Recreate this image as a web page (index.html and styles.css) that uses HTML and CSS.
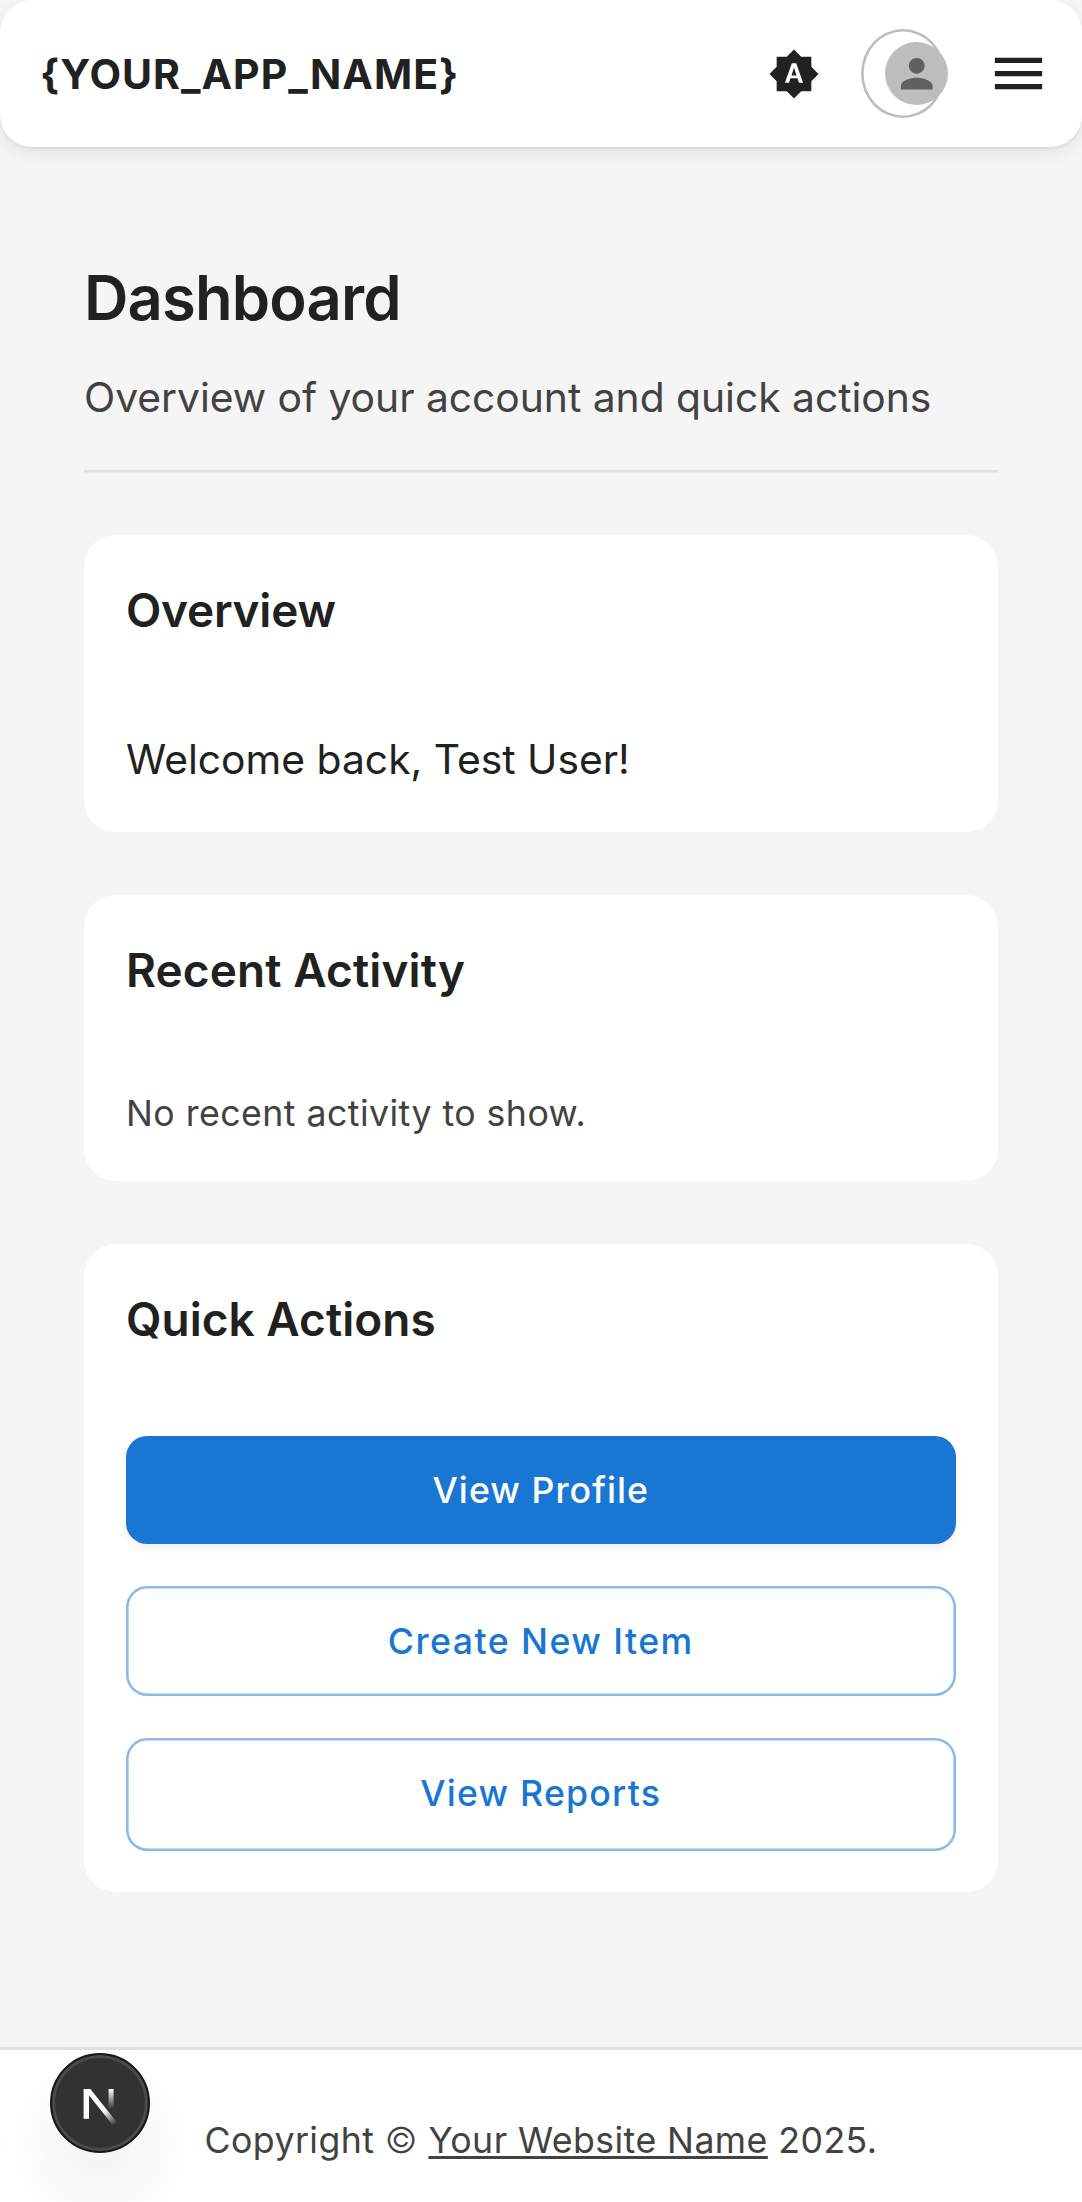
FILE: index.html
```html
<!DOCTYPE html>
<html lang="en">
<head>
<meta charset="utf-8">
<title>Dashboard</title>
<link rel="stylesheet" href="styles.css">
</head>
<body>
<div class="page">
  <header class="appbar">
    <div class="brand">{YOUR_APP_NAME}</div>
    <svg class="theme-icon" viewBox="0 0 24 24"><path d="M10.85 12.65h2.3L12 9l-1.15 3.65zM20 8.69V4h-4.69L12 .69 8.69 4H4v4.69L.69 12 4 15.31V20h4.69L12 23.31 15.31 20H20v-4.69L23.31 12 20 8.69zM14.3 16l-.7-2h-3.2l-.7 2H7.8L11 7h2l3.2 9h-1.9z"/></svg>
    <div class="account">
      <span class="avatar"><svg viewBox="0 0 24 24"><path d="M12 12c2.21 0 4-1.79 4-4s-1.79-4-4-4-4 1.79-4 4 1.79 4 4 4zm0 2c-2.67 0-8 1.34-8 4v2h16v-2c0-2.66-5.33-4-8-4z"/></svg></span>
    </div>
    <svg class="menu-icon" viewBox="0 0 24 24"><path d="M3 18h18v-2H3v2zm0-5h18v-2H3v2zm0-7v2h18V6H3z"/></svg>
  </header>

  <main class="main">
    <div class="intro">
      <h1>Dashboard</h1>
      <p>Overview of your account and quick actions</p>
    </div>
    <section class="card">
      <h2 class="t-overview">Overview</h2>
      <p class="welcome">Welcome back, Test User!</p>
    </section>
    <section class="card">
      <h2 class="t-recent">Recent Activity</h2>
      <p class="muted">No recent activity to show.</p>
    </section>
    <section class="card quick">
      <h2>Quick Actions</h2>
      <div class="actions">
        <button class="btn primary">View Profile</button>
        <button class="btn create">Create New Item</button>
        <button class="btn reports">View Reports</button>
      </div>
    </section>
  </main>

  <footer class="footer">Copyright <span class="mark">©</span> <a>Your Website Name</a> 2025.</footer>

  <div class="devtools">
    <svg viewBox="0 0 100 100">
      <defs>
        <linearGradient id="diag" gradientUnits="userSpaceOnUse" x1="54" y1="58" x2="65" y2="72"><stop offset="0" stop-color="#fff"/><stop offset="1" stop-color="#fff" stop-opacity="0"/></linearGradient>
        <linearGradient id="stem" gradientUnits="userSpaceOnUse" x1="0" y1="36" x2="0" y2="56"><stop offset="0" stop-color="#fff"/><stop offset="1" stop-color="#fff" stop-opacity="0"/></linearGradient>
      </defs>
      <rect x="33.6" y="36" width="5.4" height="29.8" fill="#fff"/>
      <polygon points="33.6,36 40.4,36 67,69.4 63,72.6 36,38.6" fill="url(#diag)"/>
      <rect x="58.6" y="36" width="5" height="20" fill="url(#stem)"/>
    </svg>
  </div>
</div>
</body>
</html>
```
FILE: styles.css
```css
* { box-sizing: border-box; }

body {
  margin: 0;
  background: #f5f5f5;
  color: #212121;
  font-family: Inter, "Liberation Sans", sans-serif;
  font-optical-sizing: none;
}

h1, h2, p { margin: 0; }

.page {
  position: relative;
  display: flex;
  flex-direction: column;
  height: 2202px;
  overflow: hidden;
}

.appbar {
  display: flex;
  align-items: center;
  gap: 42px;
  height: 147px;
  padding: 0 32px 0 40px;
  background: #fff;
  border-radius: 32px;
  box-shadow: 0 2px 3px rgba(0, 0, 0, .06), 0 6px 18px rgba(0, 0, 0, .07);
}

.brand {
  flex: 1;
  padding-top: 1px;
  font-size: 41px;
  font-weight: 650;
  letter-spacing: 1px;
}

.theme-icon { width: 52px; height: 52px; margin: 1px -.6px 0 0; fill: #212121; }
.menu-icon { width: 63px; height: 63px; fill: #212121; }

.account {
  display: flex;
  align-items: center;
  width: 84px;
  height: 89px;
  padding-left: 23.5px;
  border-radius: 50%;
  box-shadow: inset 0 0 0 2.6px #bdbdbd;
}

.avatar {
  display: flex;
  flex: none;
  align-items: center;
  justify-content: center;
  width: 63.5px;
  height: 63.5px;
  border-radius: 50%;
  background: #bdbdbd;
}
.avatar svg { width: 47.5px; height: 47.5px; fill: #616161; }

.main {
  display: flex;
  flex-direction: column;
  gap: 63px;
  width: 913.5px;
  margin: 112px 0 0 84px;
}

.intro {
  height: 213.2px;
  border-bottom: 2px solid #e0e0e0;
  box-shadow: 0 1px 0 #ececec;
}
.intro h1 {
  font-size: 61.5px;
  font-weight: 600;
  line-height: 78px;
  letter-spacing: -.85px;
}
.intro p {
  margin-top: 29px;
  color: #424242;
  font-size: 40.8px;
  line-height: 63px;
  letter-spacing: -.03px;
}

.card {
  padding: 43px 42px 41px;
  background: #fff;
  border-radius: 32px;
}
.card h2 {
  margin-bottom: 84px;
  font-size: 45.9px;
  font-weight: 600;
  line-height: 66px;
}
.card .t-overview { letter-spacing: -.2px; }
.card .t-recent { margin-bottom: 83px; letter-spacing: .15px; }
.quick { padding-top: 42.6px; }
.quick h2 { margin-bottom: 83px; letter-spacing: .06px; }

.welcome { font-size: 40.8px; line-height: 63px; }

.muted {
  color: #424242;
  font-size: 35.7px;
  line-height: 53.2px;
  letter-spacing: .45px;
}

.actions { display: flex; flex-direction: column; gap: 41.6px; }

.btn {
  height: 110.7px;
  padding: 0;
  border: 0;
  border-radius: 21px;
  background: #fff;
  box-shadow: inset 0 0 0 2.6px #8cbaea;
  color: #1976d2;
  font: inherit;
  font-size: 35.7px;
  font-weight: 500;
  letter-spacing: 1.2px;
}
.btn.primary {
  height: 108px;
  background: #1976d2;
  color: #fff;
  letter-spacing: 1.05px;
  box-shadow: 0 5px 10px rgba(0, 0, 0, .06);
}
.btn.create { letter-spacing: 1.44px; }
.btn.reports { height: 113px; padding-bottom: 3px; }

.footer {
  flex: none;
  height: 155px;
  margin-top: auto;
  padding-top: 64px;
  border-top: 3px solid #e0e0e0;
  background: #fff;
  color: #424242;
  font-size: 35.7px;
  line-height: 53px;
  letter-spacing: .43px;
  text-align: center;
}
.footer .mark { font-weight: 300; }
.footer a {
  text-decoration: underline;
  text-decoration-thickness: 2.6px;
  text-underline-offset: 3px;
}

/* Floating badge over the footer */
.devtools {
  position: absolute;
  left: 50px;
  top: 2052.5px;
  width: 100px;
  height: 100px;
  border: 2px solid #171717;
  border-radius: 50%;
  background: #323232;
  box-shadow: inset 0 0 0 3px #4b4b4b, 0 42px 84px -21px rgba(0, 0, 0, .2);
}
.devtools svg { display: block; width: 100px; height: 100px; margin: -2px; }
```
